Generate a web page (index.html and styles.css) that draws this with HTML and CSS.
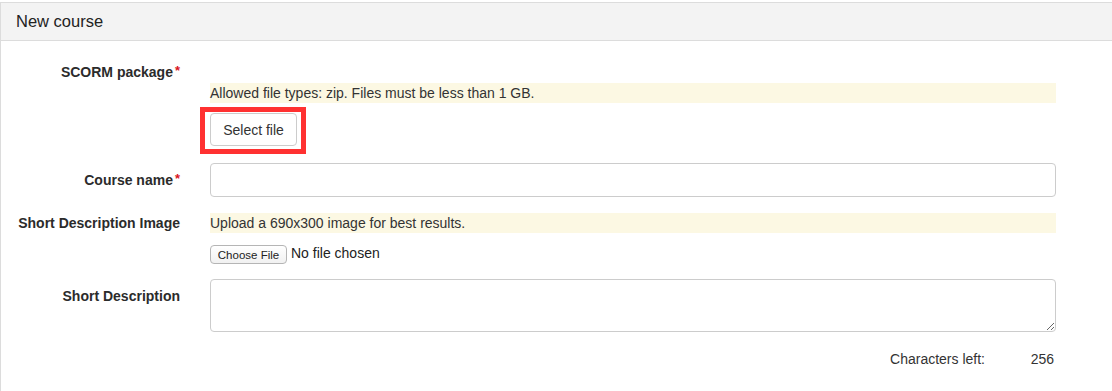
FILE: index.html
```html
<!DOCTYPE html>
<html lang="en">
<head>
  <meta charset="UTF-8">
  <title>New course</title>
  <link rel="stylesheet" href="styles.css">
</head>
<body>
  <div class="panel">
    <div class="panel-heading">New course</div>
    <div class="panel-body">
      <div class="form-row row-package">
        <label class="form-label">SCORM package<span class="req">*</span></label>
        <div class="form-field">
          <div class="hint">Allowed file types: zip. Files must be less than 1 GB.</div>
          <span class="highlight"><button type="button" class="btn">Select file</button></span>
        </div>
      </div>

      <div class="form-row row-name">
        <label class="form-label label-input">Course name<span class="req">*</span></label>
        <div class="form-field">
          <input type="text" class="text-input">
        </div>
      </div>

      <div class="form-row row-image">
        <label class="form-label">Short Description Image</label>
        <div class="form-field">
          <div class="hint">Upload a 690x300 image for best results.</div>
          <div class="file-picker">
            <button type="button" class="file-btn">Choose File</button>
            <span class="file-name">No file chosen</span>
          </div>
        </div>
      </div>

      <div class="form-row row-desc">
        <label class="form-label label-input">Short Description</label>
        <div class="form-field">
          <textarea class="text-area"></textarea>
        </div>
      </div>

      <div class="chars-left">
        <span>Characters left:</span>
        <span class="chars-count">256</span>
      </div>
    </div>
  </div>
</body>
</html>
```

FILE: styles.css
```css
body {
  margin: 0;
  font-family: "Liberation Sans", Arial, sans-serif;
  font-size: 14px;
  color: #333;
  background: #fff;
}
.panel {
  margin-top: 2px;
  border: 1px solid #dcdcdc;
  border-right: none;
  border-bottom: none;
  min-height: 390px;
}
.panel-heading {
  background-color: #f3f3f3;
  border-bottom: 1px solid #dcdcdc;
  padding: 10px 15px;
  font-size: 16.5px;
  line-height: 17px;
  color: #222;
}
.panel-body {
  padding-top: 21px;
}
.form-row {
  display: grid;
  grid-template-columns: 179px 846px;
  column-gap: 30px;
}
.form-label {
  text-align: right;
  font-weight: bold;
  line-height: 20px;
  color: #2b2b2b;
}
.label-input {
  padding-top: 7px;
}
.req {
  color: #d9141c;
  margin-left: 2px;
  font-size: 13px;
  position: relative;
  top: -2px;
}
.hint {
  background-color: #fcf8e3;
  line-height: 20px;
}
.row-package .hint {
  margin-top: 21px;
  margin-bottom: 4px;
}
.highlight {
  display: inline-block;
  margin-left: -10px;
  border: 5px solid #ff3131;
  padding: 1px 4px 3px 5px;
}
.btn {
  display: block;
  font-family: "Liberation Sans", Arial, sans-serif;
  font-size: 14px;
  color: #333;
  background: #fff;
  border: 1px solid #ccc;
  border-radius: 4px;
  height: 33px;
  padding: 0 12px;
  width: 87px;
}
.row-name {
  margin-top: 9px;
}
.text-input {
  box-sizing: border-box;
  width: 100%;
  height: 34px;
  border: 1px solid #ccc;
  border-radius: 4px;
  margin: 0;
}
.row-image {
  margin-top: 16px;
}
.file-picker {
  display: flex;
  align-items: center;
  gap: 4px;
  margin-top: 12px;
}
.file-btn {
  font-family: "Liberation Sans", Arial, sans-serif;
  font-size: 11.5px;
  color: #222;
  height: 19px;
  width: 77px;
  padding: 0;
  background: linear-gradient(#fff, #f1f1f1);
  border: 1px solid #b5b5b5;
  border-radius: 4px;
}
.file-name {
  font-size: 14px;
  line-height: 16px;
  margin-top: -3px;
  color: #222;
}
.row-desc {
  margin-top: 15px;
}
.text-area {
  box-sizing: border-box;
  display: block;
  width: 100%;
  height: 53px;
  border: 1px solid #ccc;
  border-radius: 4px;
  margin: 0;
}
.chars-left {
  display: flex;
  width: 1053px;
  justify-content: flex-end;
  margin-top: 17px;
  line-height: 20px;
}
.chars-count {
  width: 69px;
  text-align: right;
}
```
